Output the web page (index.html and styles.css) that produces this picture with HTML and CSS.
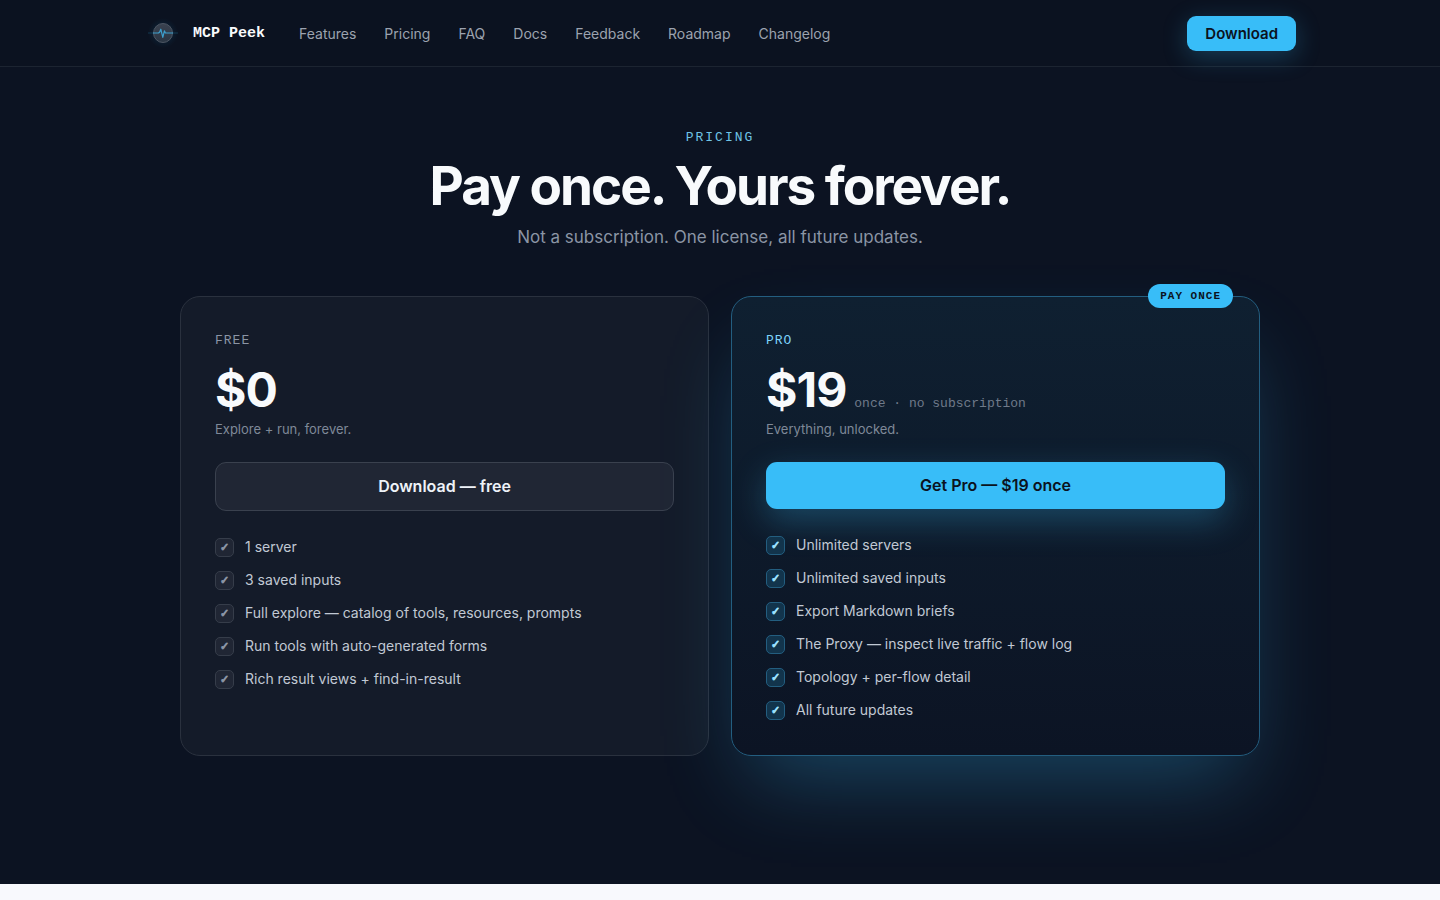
FILE: index.html
```html
<!DOCTYPE html>
<html lang="en">
<head>
    <meta charset="UTF-8">
    <meta name="viewport" content="width=device-width, initial-scale=1.0">
    <title>Pricing - MCP Peek</title>
    <link rel="stylesheet" href="styles.css">
</head>
<body>
    <header class="site-header">
        <div class="nav-wrap">
            <a class="brand" href="#">
                <svg class="brand-icon" viewBox="0 0 30 30" aria-hidden="true">
                    <defs>
                        <radialGradient id="halo">
                            <stop offset="0" stop-color="#0e4a6e" stop-opacity="0.45"/>
                            <stop offset="1" stop-color="#0e4a6e" stop-opacity="0"/>
                        </radialGradient>
                        <linearGradient id="lens" x1="0" y1="0" x2="0" y2="1">
                            <stop offset="0" stop-color="#3a4250"/>
                            <stop offset="1" stop-color="#2a3543"/>
                        </linearGradient>
                    </defs>
                    <circle cx="15" cy="15" r="15" fill="url(#halo)"/>
                    <path d="M0 15h30" stroke="#174b66" stroke-width="1" opacity="0.7"/>
                    <circle cx="15" cy="15" r="9.5" fill="url(#lens)" stroke="#4d5663" stroke-width="1"/>
                    <path d="M5 15h5.5l1.2-1 1.1-2.8 2 8.2 1.6-6.6 1 2.2h7.6" fill="none" stroke="#3d9fce" stroke-width="1.2" stroke-linejoin="round"/>
                </svg>
                <span>MCP Peek</span>
            </a>
            <nav class="nav-links">
                <a href="#features">Features</a>
                <a href="#pricing">Pricing</a>
                <a href="#faq">FAQ</a>
                <a href="#docs">Docs</a>
                <a href="#feedback">Feedback</a>
                <a href="#roadmap">Roadmap</a>
                <a href="#changelog">Changelog</a>
            </nav>
            <a class="nav-download" href="#download">Download</a>
        </div>
    </header>

    <section class="pricing" id="pricing">
        <div class="heading">
            <p class="eyebrow">PRICING</p>
            <h1>Pay once. Yours forever.</h1>
            <p class="lead">Not a subscription. One license, all future updates.</p>
        </div>

        <div class="plans">
            <article class="plan">
                <h2 class="plan-name">FREE</h2>
                <div class="price"><span class="amount">$0</span></div>
                <p class="plan-note">Explore + run, forever.</p>
                <a class="btn btn-ghost" href="#download">Download — free</a>
                <ul class="features">
                    <li>1 server</li>
                    <li>3 saved inputs</li>
                    <li>Full explore — catalog of tools, resources, prompts</li>
                    <li>Run tools with auto-generated forms</li>
                    <li>Rich result views + find-in-result</li>
                </ul>
            </article>

            <article class="plan plan-pro">
                <span class="badge">PAY ONCE</span>
                <h2 class="plan-name">PRO</h2>
                <div class="price">
                    <span class="amount">$19</span>
                    <span class="term">once · no subscription</span>
                </div>
                <p class="plan-note">Everything, unlocked.</p>
                <a class="btn btn-primary" href="#buy">Get Pro — $19 once</a>
                <ul class="features">
                    <li>Unlimited servers</li>
                    <li>Unlimited saved inputs</li>
                    <li>Export Markdown briefs</li>
                    <li>The Proxy — inspect live traffic + flow log</li>
                    <li>Topology + per-flow detail</li>
                    <li>All future updates</li>
                </ul>
            </article>
        </div>
    </section>
</body>
</html>
```
FILE: styles.css
```css
*,
*::before {
    box-sizing: border-box;
}
body {
    margin: 0;
    background: #f8f9fd;
    color: #f8fafc;
    font-family: Inter, "Liberation Sans", sans-serif;
    font-size: 15px;
}
h1, h2, p, ul {
    margin: 0;
    padding: 0;
}
a {
    color: inherit;
    text-decoration: none;
}

/* header */
.site-header {
    position: relative;
    background: #0b1220;
    border-bottom: 1px solid #1c2431;
}
.nav-wrap {
    display: flex;
    align-items: center;
    max-width: 1200px;
    min-height: 66px;
    margin: 0 auto;
    padding: 0 24px;
}
.brand {
    display: flex;
    align-items: center;
    gap: 15px;
    margin-left: 4px;
    font-family: "Liberation Mono", monospace;
    font-size: 15px;
    font-weight: 700;
    white-space: nowrap;
}
.brand-icon {
    width: 30px;
    height: 30px;
}
.nav-links {
    display: flex;
    gap: 28px;
    margin-left: 34px;
    color: #9ca3af;
    font-size: 14px;
}
.nav-download {
    margin-left: auto;
    padding: 0 18px;
    border-radius: 9px;
    background: #38bdf8;
    box-shadow: 0 6px 24px rgba(56, 189, 248, 0.25);
    color: #0b1220;
    font-size: 15px;
    font-weight: 600;
    line-height: 35px;
}

/* pricing */
.pricing {
    padding: 61px 24px 128px;
    background: #0c1322;
}
.heading {
    text-align: center;
}
.eyebrow {
    color: #6fc3e6;
    font-family: "Liberation Mono", monospace;
    font-size: 13px;
    line-height: 20px;
    letter-spacing: 2px;
}
h1 {
    margin-top: 10px;
    font-size: 53px;
    font-weight: 700;
    line-height: 56px;
    letter-spacing: -2px;
}
.lead {
    margin-top: 10px;
    color: #8b95a5;
    font-size: 17px;
    line-height: 26px;
}
.plans {
    display: grid;
    grid-template-columns: 1fr 1fr;
    gap: 22px;
    max-width: 1080px;
    margin: 46px auto 0;
}
.plan {
    position: relative;
    display: flex;
    flex-direction: column;
    padding: 34px;
    border: 1px solid #2a313e;
    border-radius: 20px;
    background: rgba(255, 255, 255, 0.035);
}
.plan-pro {
    border-color: #235e80;
    background: linear-gradient(#0f2031, #0c1424);
    box-shadow: 0 40px 80px -20px rgba(56, 189, 248, 0.3);
}
.badge {
    position: absolute;
    top: -13px;
    right: 26px;
    padding: 0 12px;
    border-radius: 12px;
    background: #38bdf8;
    color: #0b1220;
    font-family: "Liberation Mono", monospace;
    font-size: 11px;
    font-weight: 700;
    line-height: 24px;
    letter-spacing: 1px;
}
.plan-name {
    color: #8b95a5;
    font-family: "Liberation Mono", monospace;
    font-size: 13px;
    font-weight: 400;
    line-height: 20px;
    letter-spacing: 1px;
}
.plan-pro .plan-name {
    color: #7dd3fc;
}
.price {
    display: flex;
    align-items: baseline;
    gap: 8px;
    margin-top: 10px;
}
.amount {
    font-size: 48px;
    font-weight: 700;
    line-height: 58px;
    letter-spacing: -1px;
}
.term {
    color: #6f7a8a;
    font-family: "Liberation Mono", monospace;
    font-size: 13px;
}
.plan-note {
    color: #7f8998;
    font-size: 13px;
    line-height: 20px;
}
.btn {
    margin-top: 23px;
    border-radius: 11px;
    font-size: 16px;
    font-weight: 600;
    line-height: 47px;
    text-align: center;
}
.btn-ghost {
    border: 1px solid #3a414e;
    background: #202634;
    color: #eef2f8;
}
.btn-primary {
    background: #38bdf8;
    box-shadow: 0 12px 34px rgba(56, 189, 248, 0.28);
    color: #0b1220;
}
.features {
    display: grid;
    gap: 11px;
    margin-top: 25px;
    color: #c1c9d4;
    font-size: 14px;
    line-height: 22px;
    list-style: none;
}
.features li {
    display: flex;
    align-items: center;
    gap: 11px;
}
.features li::before {
    content: "✓";
    flex: none;
    width: 19px;
    height: 19px;
    border: 1px solid #363d4a;
    border-radius: 5px;
    background: #202634;
    color: #8b95a5;
    font-family: "DejaVu Sans", sans-serif;
    font-size: 11px;
    font-weight: 700;
    line-height: 17px;
    text-align: center;
    -webkit-text-stroke: 1px currentColor;
}
.plan-pro .features li::before {
    border-color: #235e80;
    background: #12344c;
    color: #9be0ff;
}

@media (max-width: 860px) {
    .nav-links {
        display: none;
    }
    .plans {
        grid-template-columns: 1fr;
    }
}
```
